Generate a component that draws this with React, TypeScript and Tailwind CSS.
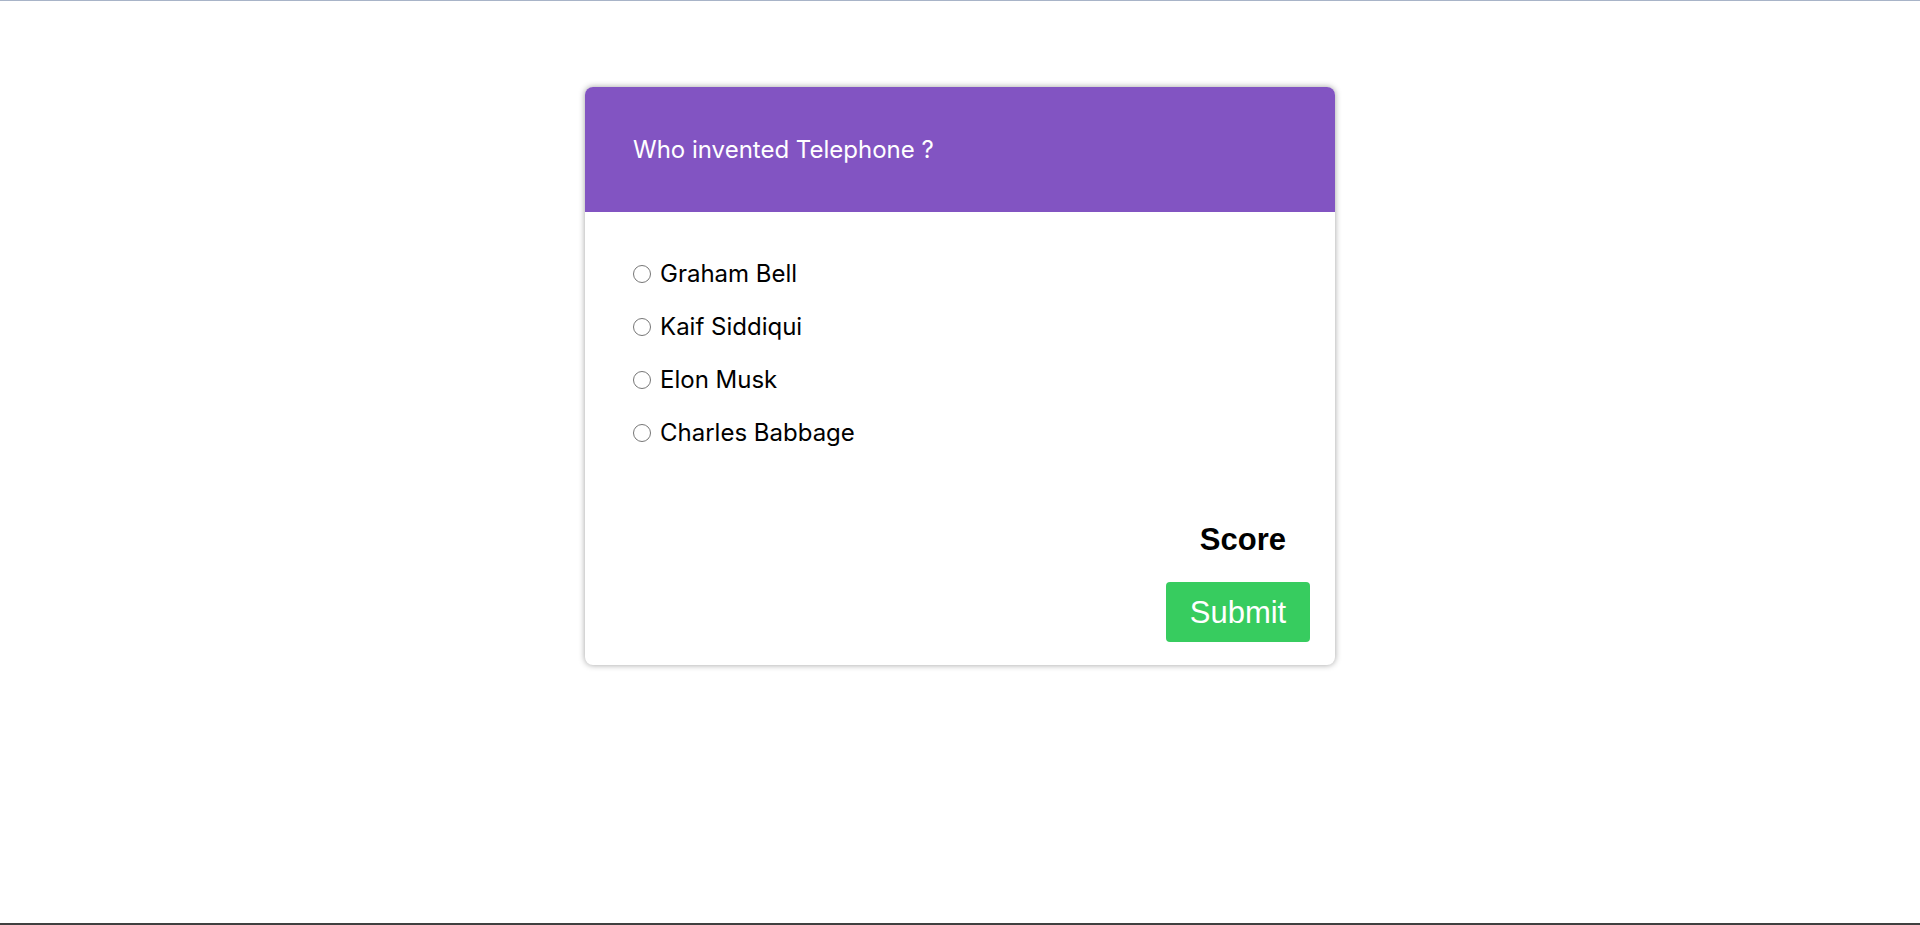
import React from "react";

const options = ["Graham Bell", "Kaif Siddiqui", "Elon Musk", "Charles Babbage"];

export default function App() {
  return (
    <div className="relative w-full h-[925px] bg-white overflow-hidden">
      <div className="absolute top-0 left-0 w-full h-px bg-[#a8b4c8]" />
      <div className="flex flex-col items-center pt-[87px]">
        <div className="w-[750px] h-[578px] bg-white rounded-[8px] overflow-hidden shadow-[0_0_6px_rgba(0,0,0,0.38)] flex flex-col">
          <div className="h-[125px] bg-[#8254c2] flex items-center pl-[48px]">
            <h2 className="text-white text-[24px] leading-[29px] font-normal" style={{ fontFamily: "Inter, sans-serif" }}>
              Who invented Telephone ?
            </h2>
          </div>
          <ul className="flex flex-col gap-[24px] pt-[47px] px-[48px]">
            {options.map((o) => (
              <li key={o} className="flex items-center h-[29px]">
                <input type="radio" name="answer" className="w-[18px] h-[18px] m-0" />
                <label className="ml-[9px] text-[24px] leading-[29px] text-black" style={{ fontFamily: "Inter, sans-serif" }}>
                  {o}
                </label>
              </li>
            ))}
          </ul>
          <div className="flex flex-col items-end pr-[25px] mt-[75px]">
            <h3 className="mr-[24px] text-[31px] font-bold leading-[35px] text-black" style={{ fontFamily: "'Liberation Sans', Arial, sans-serif" }}>
              Score
            </h3>
            <button className="mt-[25px] h-[60px] w-[144px] rounded-[4px] bg-[#37cc5f] text-white text-[31px] leading-[35px]" style={{ fontFamily: "'Liberation Sans', Arial, sans-serif" }}>
              Submit
            </button>
          </div>
        </div>
      </div>
      <div className="absolute bottom-0 left-0 w-full h-[2px] bg-[#404040]" />
    </div>
  );
}
